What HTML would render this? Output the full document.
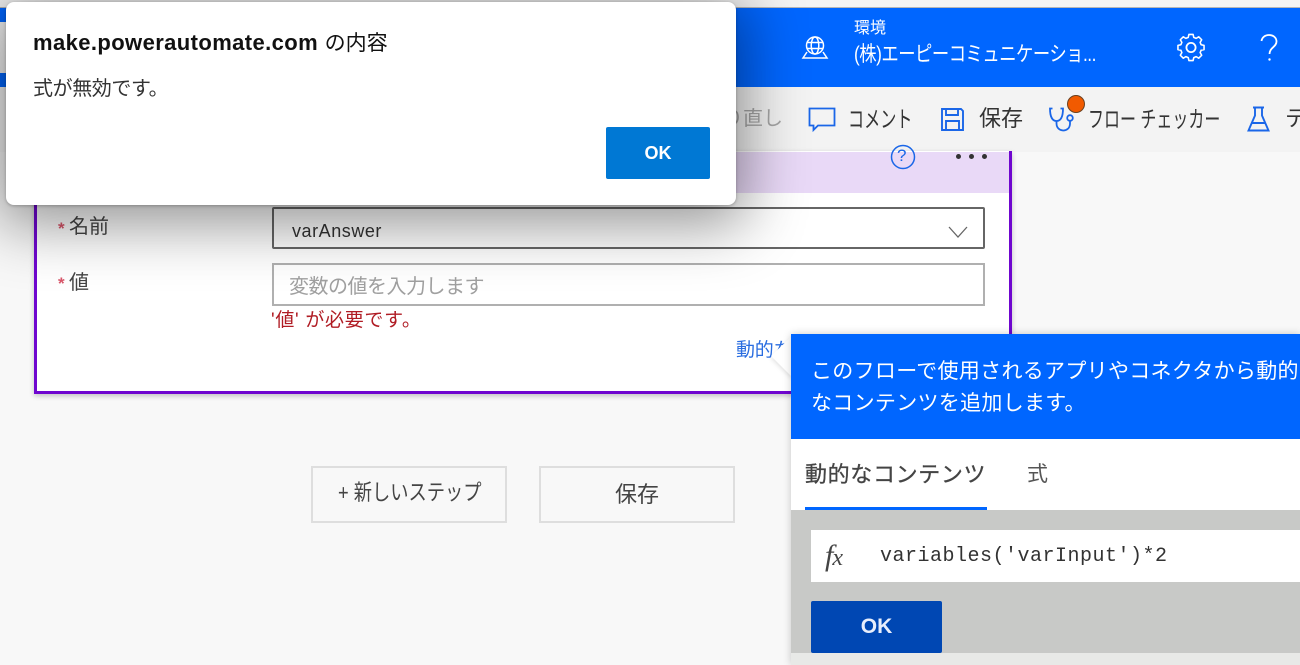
<!DOCTYPE html>
<html lang="ja"><head><meta charset="utf-8"><title>Power Automate</title>
<style>
*{box-sizing:border-box}
html,body{margin:0;padding:0}
body{width:1300px;height:665px;overflow:hidden;position:relative;background:#f8f8f8;font-family:"Liberation Sans","Noto Sans CJK JP",sans-serif;color:#333}
.a{position:absolute;white-space:nowrap}
.s{transform-origin:0 50%}
svg{position:absolute;overflow:visible}
.st{position:absolute;color:#d9566a;font-size:17px;line-height:20px;font-weight:700}
</style></head><body>
<div class="a" style="left:0;top:0;width:1300px;height:8px;background:#f4f4f4;border-bottom:1px solid #b5b5b5"></div>
<div class="a" style="left:0;top:8px;width:1300px;height:79px;background:#0066ff"></div>
<div class="a" style="left:0;top:22px;width:8px;height:51px;background:#f4f4f4"></div>
<div class="a" style="left:0;top:87px;width:1300px;height:65px;background:#f3f3f3"></div>

<svg style="left:802px;top:36px" width="26" height="23" viewBox="0 0 26 23" fill="none" stroke="#fff" stroke-width="1.500"><circle cx="13" cy="9.500" r="8.500"/><ellipse cx="13" cy="9.500" rx="3.800" ry="8.500"/><path d="M5 6.500h16M5 12.500h16M5 16L1 22h24l-4-6"/></svg>
<div class="a" style="left:854px;top:19px;font-size:16px;line-height:20px;color:#fff">環境</div>
<div class="a s" style="left:854px;top:42px;font-size:21px;line-height:26px;color:#fff;letter-spacing:-.6px;transform:scaleX(.825)">(株)エーピーコミュニケーショ...</div>
<svg style="left:1177px;top:34px" width="28" height="28" viewBox="0 0 28 28" fill="none" stroke="#fff" stroke-width="1.800" stroke-linejoin="round"><circle cx="14" cy="13.500" r="4.600"/><path d="M11.600 1h4.800l.8 3.400 2.700 1.100 3-1.800 3.400 3.400-1.800 3 1.100 2.700 3.400.8v4.800l-3.400.8-1.100 2.700 1.800 3-3.400 3.400-3-1.800-2.700 1.100-.8 3.400h-4.800l-.8-3.400-2.700-1.100-3 1.800-3.400-3.400 1.800-3-1.100-2.700-3.400-.8v-4.800l3.400-.8 1.100-2.700-1.800-3 3.400-3.400 3 1.800 2.700-1.100z" transform="translate(14 13.500) scale(.87) translate(-14 -16)"/></svg>
<svg style="left:1260px;top:34px" width="18" height="28" viewBox="0 0 18 28" fill="none" stroke="#fff" stroke-width="1.800"><path d="M1.500 7C2 3.500 5 1 9 1c4.500 0 7.500 2.800 7.500 6.500 0 5.500-7 6-7 12.500"/><circle cx="9.500" cy="25.500" r="1.200" fill="#fff" stroke="none"/></svg>

<div class="a" style="left:723px;top:105px;font-size:20px;line-height:28px;color:#a6a6a6">り直し</div>
<svg style="left:808px;top:107px" width="28" height="25" viewBox="0 0 28 25" fill="none" stroke="#1a66e8" stroke-width="1.800"><path d="M1.500 1.500h25v17H10l-4.500 4.500v-4.500h-4z"/></svg>
<div class="a s" style="left:848px;top:105px;font-size:23px;line-height:28px;color:#333;transform:scaleX(.7)">コメント</div>
<svg style="left:941px;top:107px" width="23" height="24" viewBox="0 0 23 24" fill="none" stroke="#1a66e8" stroke-width="1.900"><path d="M1 2h19l2 2v19H1zM5 2v6h12V2M5 23v-9h13v9"/></svg>
<div class="a" style="left:979px;top:105px;font-size:22px;line-height:28px;color:#333">保存</div>
<svg style="left:1049px;top:107px" width="28" height="26" viewBox="0 0 28 26" fill="none" stroke="#1a66e8" stroke-width="1.800"><path d="M3.500 1.500H1c0 7.500 2 12.500 6.500 12.500S14 9 14 1.500h-2.500M7.500 14v2.500c0 9 13 9.500 13.500 .5v-3"/><circle cx="21" cy="11" r="2.800"/></svg>
<div class="a" style="left:1067px;top:95px;width:18px;height:18px;border-radius:50%;background:#f15a00;border:1px solid #6a4020"></div>
<div class="a s" style="left:1088px;top:105px;font-size:23px;line-height:28px;color:#333;transform:scaleX(.695)">フロー チェッカー</div>
<svg style="left:1247px;top:106px" width="23" height="26" viewBox="0 0 23 26" fill="none" stroke="#1a66e8" stroke-width="1.900"><path d="M6 1.500h11M8 1.500v8L1.500 24.500h20L15 9.500v-8M5 17h13"/></svg>
<div class="a" style="left:1285px;top:105px;font-size:22px;line-height:28px;color:#333">テ</div>

<!-- card -->
<div class="a" style="left:34px;top:151px;width:978px;height:243px;background:#fff;border:3px solid #6f06cf;border-top:0;box-shadow:0 2px 5px rgba(0,0,0,.22)"></div>
<div class="a" style="left:37px;top:152px;width:972px;height:41px;background:#e9d9f7"></div>
<svg style="left:890px;top:146px" width="26" height="24" viewBox="0 0 26 24" fill="none" stroke="#1a66e8" stroke-width="1.500"><circle cx="13" cy="11" r="11.500"/></svg>
<div class="a" style="left:897px;top:146px;font-size:17px;line-height:20px;color:#1a66e8">?</div>
<div class="a" style="left:956px;top:154px;width:5px;height:5px;border-radius:50%;background:#333;box-shadow:13px 0 #333,26px 0 #333"></div>

<div class="st" style="left:58px;top:219px">*</div>
<div class="a" style="left:69px;top:213px;font-size:20px;line-height:28px;color:#444">名前</div>
<div class="a" style="left:272px;top:207px;width:713px;height:42px;border:2px solid #666;border-radius:2px;background:#fff"></div>
<div class="a" style="left:292px;top:217px;font-size:18px;line-height:28px;color:#333;letter-spacing:.55px">varAnswer</div>
<svg style="left:948px;top:226px" width="20" height="12" viewBox="0 0 20 12" fill="none" stroke="#666" stroke-width="1.300"><path d="M1 1l9 10 9-10"/></svg>

<div class="st" style="left:58px;top:274px">*</div>
<div class="a" style="left:69px;top:269px;font-size:20px;line-height:28px;color:#444">値</div>
<div class="a" style="left:272px;top:263px;width:713px;height:43px;border:2px solid #b0b0b0;background:#fff"></div>
<div class="a" style="left:289px;top:273px;font-size:20px;line-height:28px;color:#a0a0a0;letter-spacing:-.5px">変数の値を入力します</div>
<div class="a" style="left:271px;top:308px;font-size:19px;line-height:26px;color:#b01c24;letter-spacing:.7px">'値' が必要です。</div>
<div class="a" style="left:736px;top:338px;font-size:19px;line-height:26px;color:#2a6de0;letter-spacing:-.2px">動的なコンテンツ</div>

<!-- buttons -->
<div class="a" style="left:311px;top:466px;width:196px;height:57px;border:2px solid #dedede"></div>
<div class="a s" style="left:338px;top:479px;font-size:22px;line-height:28px;color:#444;transform:scaleX(.83)">+ 新しいステップ</div>
<div class="a" style="left:539px;top:466px;width:196px;height:57px;border:2px solid #dedede;font-size:22px;line-height:53px;text-align:center;color:#444">保存</div>

<!-- panel -->
<svg style="left:764px;top:330px" width="30" height="52" viewBox="0 0 30 52"><path d="M28 6L7 26l21 21z" fill="#fff" style="filter:drop-shadow(0 2px 2px rgba(0,0,0,.12))"/></svg>
<div class="a" style="left:791px;top:334px;width:509px;height:331px;background:#e8e9e7;box-shadow:0 0 8px rgba(0,0,0,.2)"></div>
<div class="a" style="left:791px;top:334px;width:509px;height:105px;background:#0066ff"></div>
<div class="a" style="left:811px;top:356px;width:489px;overflow:hidden;font-size:21px;line-height:32px;color:#fff;letter-spacing:.3px">このフローで使用されるアプリやコネクタから動的<br>なコンテンツを追加します。</div>
<div class="a" style="left:791px;top:439px;width:509px;height:71px;background:#fff"></div>
<div class="a" style="left:805px;top:459px;font-size:22px;line-height:32px;color:#444;letter-spacing:.65px;-webkit-text-stroke:.3px #444">動的なコンテンツ</div>
<div class="a" style="left:1027px;top:459px;font-size:21px;line-height:32px;color:#555">式</div>
<div class="a" style="left:805px;top:507px;width:182px;height:3px;background:#0066ff"></div>
<div class="a" style="left:791px;top:510px;width:509px;height:143px;background:#c8c9c7"></div>
<div class="a" style="left:811px;top:530px;width:489px;height:52px;background:#fff"></div>
<div class="a" style="left:825px;top:538px;font:italic 30px/36px 'Liberation Serif',serif;color:#444;letter-spacing:-1px">f<span style="font-size:24px">x</span></div>
<div class="a" style="left:880px;top:543px;font:20px/28px 'Liberation Mono',monospace;color:#333;letter-spacing:.5px">variables('varInput')*2</div>
<div class="a" style="left:811px;top:601px;width:131px;height:52px;background:#0047b3;border-radius:2px;font-size:21px;font-weight:700;line-height:52px;text-align:center;color:#e8eefc">OK</div>

<!-- dialog -->
<div class="a" style="left:6px;top:2px;width:730px;height:203px;background:#fff;border-radius:8px;box-shadow:0 10px 60px 10px rgba(0,0,0,.42),0 1px 3px rgba(0,0,0,.25)"></div>
<div class="a" style="left:33px;top:28px;font-size:22px;line-height:30px;font-weight:700;color:#111;letter-spacing:.4px">make.powerautomate.com <span style="font-weight:400;font-size:21px;letter-spacing:0">の内容</span></div>
<div class="a" style="left:33px;top:75px;font-size:20px;line-height:28px;color:#333;letter-spacing:-.4px">式が無効です。</div>
<div class="a" style="left:606px;top:127px;width:104px;height:52px;background:#0078d4;border-radius:2px;font-size:18px;font-weight:700;line-height:52px;text-align:center;color:#fff">OK</div>
</body></html>
